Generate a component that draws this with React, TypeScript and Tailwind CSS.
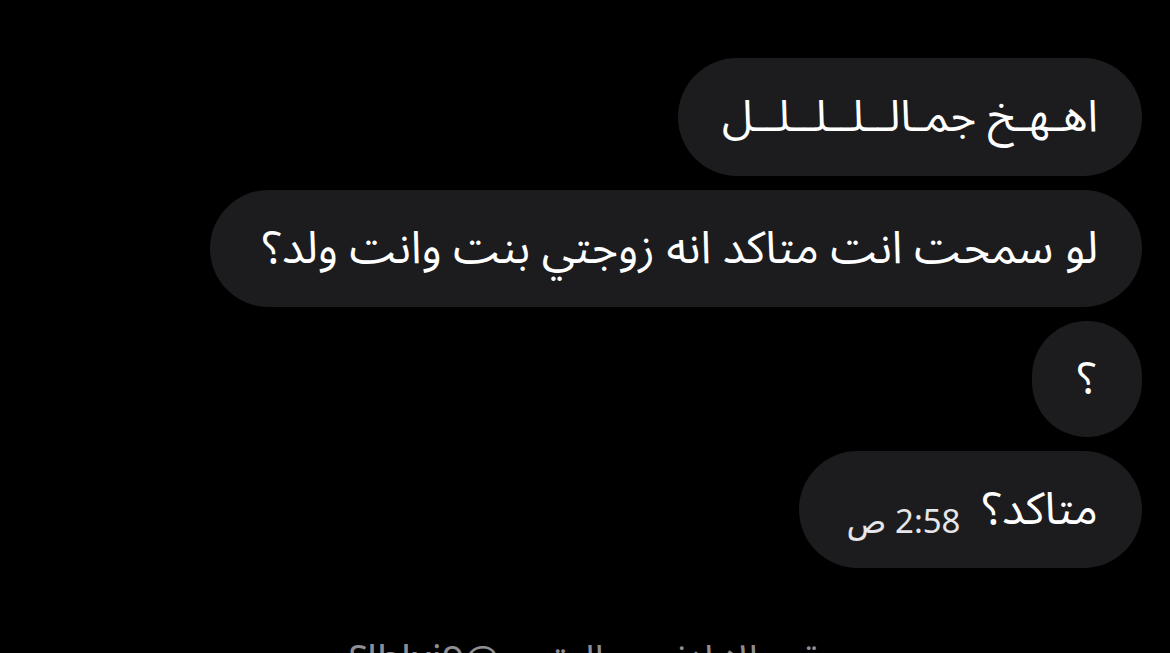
import React from "react";

const font = { fontFamily: '"Noto Sans Arabic", "DejaVu Sans", "Noto Sans", sans-serif' };

export default function App() {
  return (
    <div
      className="w-[1170px] h-[653px] overflow-hidden bg-black flex flex-col"
      style={font}
      dir="rtl"
    >
      <div className="flex flex-col items-start gap-[14px] pt-[58px] pr-[28px]">
        <div className="h-[118px] rounded-full bg-[#1c1c1e] px-[44px] flex items-center text-white text-[44px] leading-none">
          اهـهـخ جمـالــلــلــلــل
        </div>
        <div className="h-[117px] rounded-full bg-[#1c1c1e] pr-[44px] pl-[52px] flex items-center text-white text-[45px] leading-none">
          لو سمحت انت متاكد انه زوجتي بنت وانت ولد؟
        </div>
        <div className="h-[116px] w-[110px] rounded-full bg-[#1c1c1e] flex items-center justify-center text-white text-[44px] leading-none">
          ؟
        </div>
        <div className="h-[117px] rounded-full bg-[#1c1c1e] pr-[44px] pl-[48px] flex items-center gap-[22px] text-white leading-none">
          <span className="text-[45px]">متاكد؟</span>
          <span className="text-[33px] text-[#e5e5ea] mt-[22px]" style={{ fontFamily: '"Noto Sans", "DejaVu Sans", sans-serif' }}>
            2:58 ص
          </span>
        </div>
      </div>
      <div className="mt-[73px] flex justify-center text-[#8e8e93] text-[39px] leading-none">
        <span>قم بالإبلاغ عن التقرير @lhlxi9؟</span>
      </div>
    </div>
  );
}
